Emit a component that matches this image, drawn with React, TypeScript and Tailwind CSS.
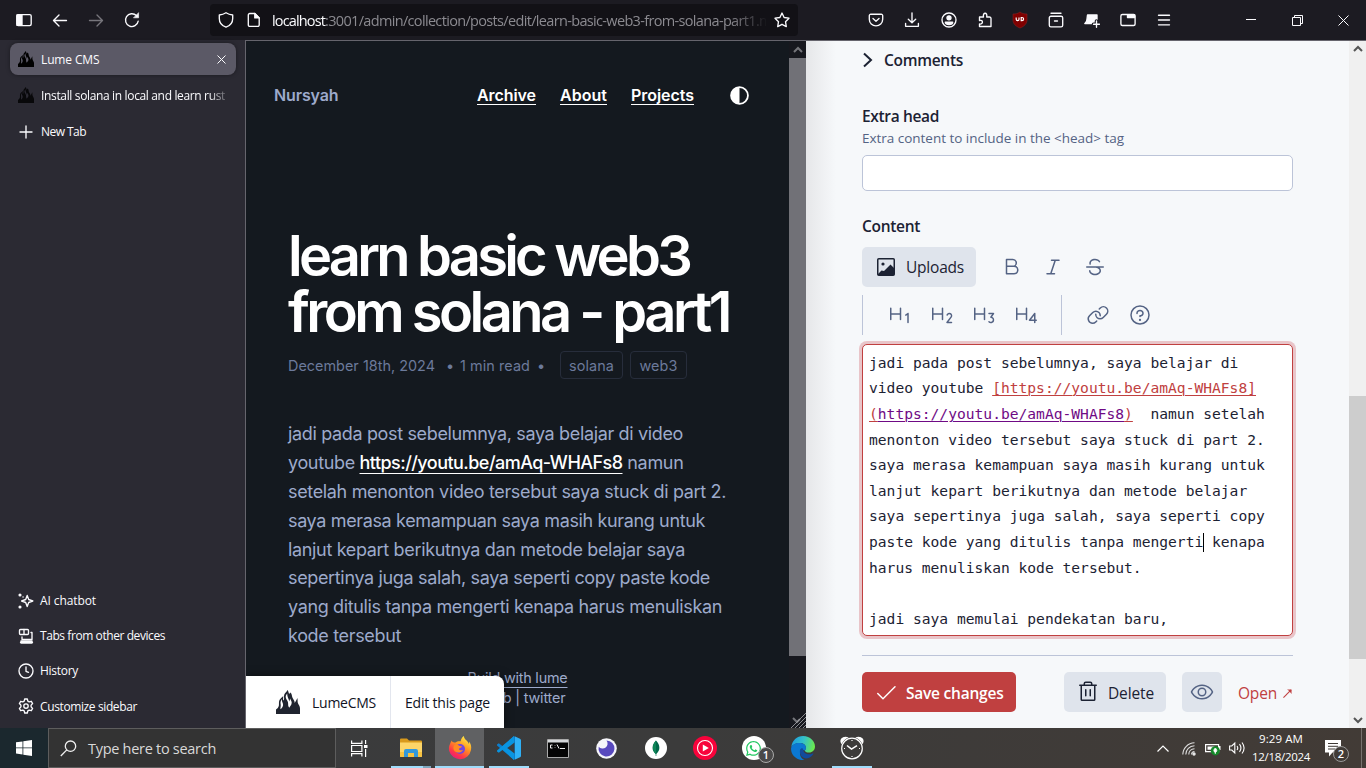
import { useLayoutEffect, useRef, type ReactNode } from "react";
import { FaWhatsapp } from "react-icons/fa";
import {
  PiCheck, PiEye, PiLink, PiQuestion, PiTextB, PiTextHFour, PiTextHOne, PiTextHThree,
  PiTextHTwo, PiTextItalic, PiTextStrikethrough, PiTrash,
} from "react-icons/pi";

/** Single-line text whose letter spacing is computed so that it takes exactly `w` pixels. */
function Fit({ w, className = "", children }: { w: number; className?: string; children: string }) {
  const ref = useRef<HTMLSpanElement>(null);
  useLayoutEffect(() => {
    const el = ref.current;
    if (!el) return;
    el.style.letterSpacing = "0px";
    const natural = el.getBoundingClientRect().width;
    el.style.letterSpacing = `${(w - natural) / children.length}px`;
  }, [w, children]);
  return (
    <span ref={ref} className={`inline-block shrink-0 whitespace-pre ${className}`}>
      {children}
    </span>
  );
}

type IconProps = { size?: number; className?: string; children: ReactNode };
function Icon({ size = 16, className = "", children }: IconProps) {
  return (
    <svg
      width={size} height={size} viewBox="0 0 16 16" fill="none" stroke="currentColor"
      strokeWidth="1.35" strokeLinecap="round" strokeLinejoin="round" className={`shrink-0 ${className}`}
    >
      {children}
    </svg>
  );
}

function Slot({ children, className = "w-9" }: { children: ReactNode; className?: string }) {
  return <div className={`flex h-full shrink-0 items-center justify-center ${className}`}>{children}</div>;
}

function Flame({ size, className = "" }: { size: number; className?: string }) {
  return (
    <svg width={size} height={size} viewBox="0 0 24 24" fill="currentColor" className={`shrink-0 ${className}`}>
      <path
        fillRule="evenodd"
        d="M0 24v-4.500c1.200-1 2.600-2 2.900-4 .3-2.200-.4-4 .9-6 .7-1.200 2.400-2.200 3.400-3.500.3 1.500-.5 3 .2 4.500C9 9 7.400 7 8.300 4.500 9 2.700 11 2 11.300 0c1.500 1.300 1 2.600 1.900 4 .5-.5.600-1 1.100-1.600 2.100 1.600 1.300 3.600 2.300 5.600.7 1.500 2.200 2.600 2.100 5 1-1.500 2-3.300 2.700-5 .5 2.500-.2 4 .9 6 .8 1.500 1.700 2.500 1.700 4.500V24zM6 9c-1.500 2-1.700 3.300-1.300 5.500.3 1.800-.5 3-.2 4.700 1.500-1.200 3-3 2.500-5.200C6.700 12.500 5.500 11 6 9zM11.200 3.500c-1 1.500-1.900 2.500-1.300 4.500.6 2 1.800 2.700 2.100 4.500.4 2-.3 3.300 1.200 5.200.7-1.500 2.600-2.500 2.500-5.200-.1-1.500-1-2.300-1.500-4-.5 1-.4 2-.9 3-.5-3-2.300-4.500-2.100-8z"
      />
    </svg>
  );
}

function TopBar() {
  return (
    <header className="flex h-10 shrink-0 items-center bg-[#1c1b22] text-[#fbfbfe]">
      <div className="flex h-full w-[210px] pl-1.5">
        <Slot><Icon><rect x=".8" y="2.600" width="14.400" height="11" rx="1.500" /><path d="M1 3h5v10.300H1z" fill="currentColor" /></Icon></Slot>
        <Slot><Icon><path d="M14.500 8.500H1.500M7 3 1.500 8.500 7 14" /></Icon></Slot>
        <Slot className="w-9 text-[#77767c]"><Icon><path d="M1.500 8.500h13M9 3l5.500 5.500L9 14" /></Icon></Slot>
        <Slot><Icon><path d="M14.200 9.200A6.400 6.400 0 1 1 12.400 3.600" /><path d="M14.600 1v4.800H9.800z" fill="currentColor" strokeWidth=".6" /></Icon></Slot>
      </div>
      <div className="flex h-8 w-[588px] items-center rounded bg-[#121116]">
        <Slot className="w-8"><Icon><path d="M8 .8c2 1.300 4.200 2 6.700 2.200v3.500c0 4-2.400 7.200-6.700 8.700-4.300-1.500-6.700-4.700-6.700-8.700V3C3.800 2.800 6 2.100 8 .8z" /></Icon></Slot>
        <Slot className="w-6"><Icon><path d="M3.800 1.500h5l4.400 4.400v7a1.500 1.500 0 0 1-1.500 1.500h-7.900a1.500 1.500 0 0 1-1.500-1.500V3a1.500 1.500 0 0 1 1.500-1.500z" /><path d="M8.800 1.500v4.400h4.400z" fill="currentColor" /></Icon></Slot>
        <div className="mt-0.5 ml-1.5 flex w-[496px] overflow-hidden whitespace-pre font-['Open_Sans',sans-serif] text-[14.500px] [mask-image:linear-gradient(to_right,black_458px,transparent_496px)]">
          <Fit w={53}>localhost</Fit>
          <Fit w={455} className="text-[#8b8a90]">:3001/admin/collection/posts/edit/learn-basic-web3-from-solana-part1.md</Fit>
        </div>
        <Slot className="ml-auto w-8"><Icon><path d="m8 1 2.100 4.500 4.900.7-3.500 3.500.8 4.900L8 12.300l-4.300 2.300.8-4.900L1 6.200l4.900-.7z" /></Icon></Slot>
      </div>
      <div className="ml-[60px] flex h-full">
        <Slot><Icon><path d="M2.800 2.200h10.400a1.500 1.500 0 0 1 1.500 1.500v3.500a6.700 6.700 0 0 1-13.400 0V3.700a1.500 1.500 0 0 1 1.500-1.500z" /><path d="m5 6.500 3 2.700 3-2.700" /></Icon></Slot>
        <Slot><Icon><path d="M8 .8v9.700M4.300 7.200 8 10.700l3.700-3.500M1.600 11.500v2.800h12.800v-2.800" /></Icon></Slot>
        <Slot className="w-[37px]"><Icon><circle cx="8" cy="8" r="7" /><circle cx="8" cy="5.800" r="2" fill="currentColor" /><path d="M4.300 10.200h7.400c0 1.300-1.400 2.300-3.700 2.300s-3.700-1-3.700-2.300z" fill="currentColor" /></Icon></Slot>
        <Slot className="w-[35px]"><Icon><path d="M2.500 14.500V12c4 .6 3.800-4.600 0-3.500V5h4c-1.100-5 4.300-5 3.200 0h2.800a1.500 1.500 0 0 1 1.500 1.500v8z" /></Icon></Slot>
        <Slot>
          <svg width="16" height="18" viewBox="0 0 16 18">
            <path d="M8 1c2 1.500 4.200 2 7 2v6c0 3.800-3 6.500-7 8-4-1.500-7-4.200-7-8V3c2.800 0 5-.5 7-2z" fill="#800000" stroke="#8a2020" strokeWidth=".6" />
            <path d="M4.200 6.500v1.800a1.400 1.400 0 0 0 2.800 0V6.500M9.200 6.500v3.200h.8a1.600 1.600 0 0 0 0-3.200z" fill="none" stroke="#fff" strokeWidth="1.200" />
          </svg>
        </Slot>
        <Slot><Icon><path d="M3 1.200h10M1.300 8V5.800a1.600 1.600 0 0 1 1.600-1.600h10.200a1.600 1.600 0 0 1 1.600 1.600v7.500a1.600 1.600 0 0 1-1.600 1.600H2.900a1.600 1.600 0 0 1-1.600-1.600zM6.500 9h3" /></Icon></Slot>
        <Slot><Icon><path d="M3.500 3h9.500v8.500H.8C2.600 10.500 3 9 3 7z" fill="currentColor" /><path d="M12.500 9v6.500M9.500 12.200h6.500" stroke="#1c1b22" strokeWidth="3.600" /><path d="M12.500 9v6.300M9.500 12.200h6" /></Icon></Slot>
        <Slot><Icon><rect x=".9" y="2.500" width="14.200" height="11" rx="1.500" /><path d="M7.500 3h7v2.500h-7z" fill="currentColor" /></Icon></Slot>
        <Slot><Icon><path d="M2.500 3.200h11M2.500 8h11M2.500 12.800h11" /></Icon></Slot>
      </div>
      <div className="ml-[46px] flex h-full">
        <Slot className="w-[46px]"><svg width="10" height="2"><path d="M0 0h10v1H0z" fill="currentColor" /></svg></Slot>
        <Slot className="w-[46px]"><svg width="11" height="11" fill="none" stroke="currentColor"><path d="M.5 2.500h8v8h-8zM2.500 2.500v-2h8v8h-2" /></svg></Slot>
        <Slot className="w-[46px]"><svg width="11" height="11" stroke="currentColor"><path d="m.5.5 10 10M10.500.5l-10 10" /></svg></Slot>
      </div>
    </header>
  );
}

function Sidebar() {
  const row = "flex h-[35px] items-center pl-[18px]";
  return (
    <aside className="flex w-[245px] shrink-0 flex-col bg-[#2b2a33] font-['Open_Sans',sans-serif] text-[12px] text-[#fbfbfe]">
      <div className="mt-[3px] flex flex-col gap-1 pl-2.5">
        <div className="flex h-8 w-[226px] items-center rounded-lg bg-[#5b5966] pl-2 shadow-[0_0_4px_rgba(0,0,0,0.4)]">
          <Flame size={16} className="text-black" />
          <Fit w={58.5} className="mt-0.5 ml-[7px]">Lume CMS</Fit>
          <svg width="9" height="9" stroke="currentColor" className="mr-[10px] ml-auto"><path d="m.5.5 8 8M8.500.5l-8 8" /></svg>
        </div>
        <div className="flex h-8 w-[226px] items-center pl-2">
          <Flame size={16} className="text-[#08080a]" />
          <div className="mt-0.5 ml-[7px] w-[186px] overflow-hidden [mask-image:linear-gradient(to_right,black_168px,transparent_190px)]">
            <Fit w={184}>Install solana in local and learn rust</Fit>
          </div>
        </div>
        <div className="flex h-8 w-[226px] items-center pl-2">
          <Icon className="mt-px"><path d="M8 2v12M2 8h12" /></Icon>
          <Fit w={45} className="mt-0.5 ml-[7px]">New Tab</Fit>
        </div>
      </div>
      <div className="mt-auto mb-[5px] flex flex-col">
        <div className={row}>
          <Icon><path d="M9.200 2.400 10.700 6.500 14.800 8l-4.100 1.500-1.500 4.100-1.500-4.100L3.600 8l4.100-1.500z" /><circle cx="2" cy="2" r=".9" fill="currentColor" /><circle cx="2" cy="14" r=".9" fill="currentColor" /><path d="M5 4h.1" /></Icon>
          <Fit w={56} className="ml-1.5">AI chatbot</Fit>
        </div>
        <div className={row}>
          <Icon><rect x="1.500" y="1.500" width="9" height="5" rx="1" /><path d="M6 1.500v4.700M13 4.500h1v7H4V9M2.500 14.300h12" /><path d="M3 13h11v2H3z" fill="currentColor" /></Icon>
          <Fit w={125} className="ml-1.5">Tabs from other devices</Fit>
        </div>
        <div className={row}>
          <Icon><circle cx="8" cy="8" r="7" /><path d="M8 4v4.300l2.500 1" /></Icon>
          <Fit w={38} className="ml-1.5">History</Fit>
        </div>
        <div className={row}>
          <Icon className="mt-px"><circle cx="8" cy="8" r="2.200" /><path d="M6.700 1h2.600l.5 2.100 1.400.8 2.100-.6 1.300 2.200-1.500 1.600v1.800l1.500 1.600-1.300 2.200-2.100-.6-1.400.8-.5 2.100H6.700l-.5-2.100-1.400-.8-2.100.6-1.300-2.200 1.500-1.600V7.100L1.400 5.500l1.300-2.200 2.100.6 1.400-.8z" /></Icon>
          <Fit w={97} className="mt-0.5 ml-1.5">Customize sidebar</Fit>
        </div>
      </div>
    </aside>
  );
}

function Preview() {
  const link = "underline decoration-1 underline-offset-[3px] text-white";
  return (
    <section className="relative flex w-[560px] shrink-0 font-['Inter',sans-serif]">
      <div className="relative flex w-[543px] flex-col overflow-hidden bg-[#14191f]">
        <nav className="flex h-[24px] items-center pl-7 text-[16px] leading-6 font-semibold text-[#9daacb] mt-[42px]">
          <Fit w={64.500}>Nursyah</Fit>
          <Fit w={59} className={`ml-[138.500px] ${link}`}>Archive</Fit>
          <Fit w={47} className={`ml-6 ${link}`}>About</Fit>
          <Fit w={63} className={`ml-6 ${link}`}>Projects</Fit>
          <svg width="19" height="19" viewBox="0 0 18 18" className="ml-9 text-white">
            <circle cx="9" cy="9" r="8" fill="none" stroke="currentColor" strokeWidth="1.700" />
            <path d="M9 1a8 8 0 0 0 0 16z" fill="currentColor" />
          </svg>
        </nav>
        <h1 className="mt-[121px] flex flex-col pl-[42px] text-[56px] leading-[56px] font-semibold text-white">
          <Fit w={401} className="self-start">learn basic web3</Fit>
          <Fit w={441} className="self-start">from solana - part1</Fit>
        </h1>
        <div className="mt-[11px] flex h-7 items-center pl-[42px] text-[14.400px] text-[#6c7a9b]">
          <Fit w={147} className="mt-px">December 18th, 2024</Fit>
          <Fit w={6} className="mt-px ml-[11px]">•</Fit>
          <Fit w={70} className="mt-px ml-2">1 min read</Fit>
          <Fit w={6} className="mt-px ml-[7px]">•</Fit>
          <div className="ml-[17px] flex h-7 w-[63px] items-center justify-center rounded border border-[#272d3b] pt-px"><Fit w={45}>solana</Fit></div>
          <div className="ml-[7px] flex h-7 w-[57px] items-center justify-center rounded border border-[#272d3b] pt-px"><Fit w={38}>web3</Fit></div>
        </div>
        <p className="mt-[41.400px] flex flex-col items-start pl-[42px] text-[18px] leading-[28.800px] text-[#9daacb]">
          <Fit w={395}>jadi pada post sebelumnya, saya belajar di video</Fit>
          <span className="flex">
            <Fit w={71.500}>{"youtube "}</Fit>
            <Fit w={263} className="font-medium text-white underline decoration-1 underline-offset-[4px]">https://youtu.be/amAq-WHAFs8</Fit>
            <Fit w={61}>{" namun"}</Fit>
          </span>
          <Fit w={438}>setelah menonton video tersebut saya stuck di part 2.</Fit>
          <Fit w={417}>saya merasa kemampuan saya masih kurang untuk</Fit>
          <Fit w={397}>lanjut kepart berikutnya dan metode belajar saya</Fit>
          <Fit w={422}>sepertinya juga salah, saya seperti copy paste kode</Fit>
          <Fit w={434}>yang ditulis tanpa mengerti kenapa harus menuliskan</Fit>
          <Fit w={113}>kode tersebut</Fit>
        </p>
        <footer className="mt-[17.600px] flex flex-col items-center text-[14.400px] leading-5 text-[#9daacb]">
          <Fit w={100} className="underline decoration-1 underline-offset-[4px]">Build with lume</Fit>
          <Fit w={96}>github | twitter</Fit>
        </footer>
        <div className="absolute bottom-0 left-0 flex h-[52px] w-[258px] items-center rounded-tr-lg bg-white font-['Open_Sans',sans-serif] text-[14px] font-medium text-[#10131f] shadow-[0_0_10px_rgba(0,0,0,0.5)]">
          <div className="flex h-full w-[145px] items-center border-r border-[#e3e6ee] pl-[30px]">
            <Flame size={24} className="text-[#20242f]" />
            <Fit w={64} className="mt-px ml-3">LumeCMS</Fit>
          </div>
          <Fit w={85} className="mt-px ml-3.5">Edit this page</Fit>
        </div>
      </div>
      <div className="flex w-[17px] flex-col bg-[#17181e]">
        <div className="flex h-[17px] items-center justify-center text-[#75757a]">
          <svg width="10" height="8" fill="none" stroke="currentColor" strokeWidth="2"><path d="m1 6 4-4 4 4" /></svg>
        </div>
        <div className="h-[598px] bg-[#717177]" />
        <svg width="17" height="17" className="mt-auto" fill="none" stroke="#a9a9ad" strokeWidth=".8">
          <path d="m4 7 4 4 3-3" stroke="#75757a" strokeWidth="2" /><path d="M2 17 17 2M6 17 17 6M10 17l7-7M14 17l3-3" />
        </svg>
      </div>
    </section>
  );
}

const tool = "flex w-[42px] h-10 shrink-0 items-center justify-center text-[#546384]";

function Editor() {
  const line = "block h-[25.600px] whitespace-pre";
  return (
    <div className="mt-[9px] flex h-[292px] flex-col rounded-[5px] border border-[#c04040] bg-white pt-[4.800px] pl-1.5 font-['DejaVu_Sans_Mono',monospace] text-[14.617px] leading-[25.600px] text-[#1c2233] ring-[3px] ring-[#e9c5c9]">
      <span className={line}>jadi pada post sebelumnya, saya belajar di</span>
      <span className={line}>video youtube <span className="text-[#c04040] underline decoration-1 underline-offset-2">[https://youtu.be/amAq-WHAFs8]</span></span>
      <span className={line}><span className="text-[#c04040] underline decoration-1 underline-offset-2">(</span><span className="text-[#6f0a85] underline decoration-1 underline-offset-2">https://youtu.be/amAq-WHAFs8</span><span className="text-[#c04040] underline decoration-1 underline-offset-2">)</span>{"  namun setelah"}</span>
      <span className={line}>menonton video tersebut saya stuck di part 2.</span>
      <span className={line}>saya merasa kemampuan saya masih kurang untuk</span>
      <span className={line}>lanjut kepart berikutnya dan metode belajar</span>
      <span className={line}>saya sepertinya juga salah, saya seperti copy</span>
      <span className={line}>paste kode yang ditulis tanpa mengerti<span className="-mr-px inline-block h-[19px] w-px bg-black align-middle" /> kenapa</span>
      <span className={line}>harus menuliskan kode tersebut.</span>
      <span className={line}> </span>
      <span className={line}>jadi saya memulai pendekatan baru,</span>
    </div>
  );
}

function AdminPanel() {
  return (
    <section className="flex min-w-0 flex-1 bg-[#f6f8fa] font-['Open_Sans',sans-serif] text-[#1c2233]">
      <div className="w-[30px] shrink-0 bg-linear-to-r from-[#e6e7e9] to-[#f6f8fa]" />
      <div className="ml-[26px] flex w-[431px] flex-col text-[15.500px]">
        <div className="mt-[7px] flex h-6 items-center font-semibold">
          <svg width="12" height="16" fill="none" stroke="currentColor" strokeWidth="2"><path d="m2 1.500 7 6.500-7 6.500" /></svg>
          <Fit w={79} className="mt-0.5 ml-2.5">Comments</Fit>
        </div>
        <div className="mt-[33px] flex h-6 items-center font-semibold"><Fit w={77}>Extra head</Fit></div>
        <div className="-mt-px flex h-5 items-center text-[13.500px] text-[#546384]"><Fit w={262}>{"Extra content to include in the <head> tag"}</Fit></div>
        <div className="mt-[7px] h-9 rounded-[5px] border border-[#bcc4d8] bg-white" />
        <div className="mt-6 flex h-6 items-center font-semibold"><Fit w={58}>Content</Fit></div>
        <div className="mt-2 flex h-10">
          <div className="flex w-[114px] items-center rounded-[5px] bg-[#dfe4ec] pl-[15px]">
            <svg width="18" height="18"><rect x=".75" y=".75" width="16.500" height="16.500" rx="1" fill="none" stroke="currentColor" strokeWidth="1.500" /><circle cx="6" cy="6" r="1.600" fill="currentColor" /><path d="m1 16 3.500-3.500 2.500.5L13.500 6.500 17 10v7H1z" fill="currentColor" /></svg>
            <Fit w={58} className="mt-px ml-[11px]">Uploads</Fit>
          </div>
          <div className="ml-[14px] flex">
            <span className={tool}><PiTextB size={24} /></span>
            <span className={tool}><PiTextItalic size={24} /></span>
            <span className={tool}><PiTextStrikethrough size={24} /></span>
          </div>
        </div>
        <div className="mt-2 flex h-10 border-l border-[#bcc4d8] pl-[15px]">
          <span className={tool}><PiTextHOne size={24} /></span>
          <span className={tool}><PiTextHTwo size={24} /></span>
          <span className={tool}><PiTextHThree size={24} /></span>
          <span className={tool}><PiTextHFour size={24} /></span>
          <span className="ml-[15px] w-px bg-[#bcc4d8]" />
          <span className={`ml-[15px] ${tool}`}><PiLink size={24} /></span>
          <span className={tool}><PiQuestion size={24} /></span>
        </div>
        <Editor />
        <div className="mt-[19px] h-px shrink-0 bg-[#bcc4d8]" />
        <div className="mt-4 flex h-10 shrink-0 items-stretch">
          <div className="flex w-[154px] items-center rounded-[5px] bg-[#c04040] pl-3 font-semibold text-white">
            <PiCheck size={24} className="shrink-0" /><Fit w={97.500} className="mt-[3px] ml-2">Save changes</Fit>
          </div>
          <div className="ml-12 flex w-[102px] items-center rounded-[5px] bg-[#dfe4ec] pl-3">
            <PiTrash size={24} className="shrink-0" /><Fit w={46} className="mt-[3px] ml-2">Delete</Fit>
          </div>
          <div className="ml-4 flex w-10 items-center justify-center rounded-[5px] bg-[#dfe4ec] text-[#546384]"><PiEye size={24} /></div>
          <div className="ml-4 flex items-center pt-[3px] text-[#c04040]">
            <Fit w={39}>Open</Fit>
            <svg width="9" height="9" viewBox="0 0 10 10" className="ml-1.5" fill="none" stroke="currentColor" strokeWidth="1.200"><path d="m.5 9.500 8.500-8.500" /><path d="M4.500.5h5v5L8 3.500 6.500 2z" fill="currentColor" stroke="none" /></svg>
          </div>
        </div>
      </div>
      <div className="ml-auto flex w-[17px] flex-col items-center bg-[#f0f0f0] text-[#555]">
        <svg width="10" height="8" className="mt-1" fill="none" stroke="currentColor" strokeWidth="2"><path d="m1 6 4-4 4 4" /></svg>
        <div className="mt-[343px] h-[263px] w-full bg-[#cdcdcd]" />
        <svg width="10" height="8" className="mt-auto mb-1" fill="none" stroke="currentColor" strokeWidth="2"><path d="m1 2 4 4 4-4" /></svg>
      </div>
    </section>
  );
}

function TaskButton({ children, bar = "", active = false }: { children: ReactNode; bar?: string; active?: boolean }) {
  return (
    <div className={`relative flex h-10 w-[49px] shrink-0 items-center justify-center ${active ? "bg-[#606163]" : ""}`}>
      {children}
      {bar && <span className={`absolute bottom-0 h-0.5 bg-[#9fdcfb] ${bar}`} />}
    </div>
  );
}

function Taskbar() {
  return (
    <footer className="flex h-10 shrink-0 items-center bg-linear-to-r from-[#3a3b3d] via-[#3b3b3b] to-[#423b36] font-['Open_Sans',sans-serif] text-white">
      <div className="flex h-10 w-12 items-center justify-center bg-[#1b282e]">
        <svg width="16" height="16" fill="currentColor"><path d="m0 2.300 6.500-.9v6.100H0zM7.300 1.300 16 0v7.500H7.300zM0 8.300h6.500v6.200L0 13.600zM7.300 8.300H16V16l-8.700-1.300z" /></svg>
      </div>
      <div className="flex h-10 w-[288px] items-center border border-[#5d5d5d] bg-[#333] pl-[11px] text-[#d9d9d9]">
        <svg width="17" height="17" fill="none" stroke="#f0f0f0" strokeWidth="1.300"><circle cx="10.500" cy="6.200" r="5.200" /><path d="M6.800 9.900.8 16" /></svg>
        <Fit w={128} className="mt-0.5 ml-[11px] text-[14.500px]">Type here to search</Fit>
      </div>
      <div className="flex w-[50px] justify-center pr-1">
        <svg width="17" height="17" fill="none" stroke="#fff" strokeWidth="1.200"><path d="M.6.500v2.800h10.300V.5M.6 16.500v-2.800h10.300v2.800M.6 5.500h10.300v6H.6zM14.600 0v4M14.600 9v8" /><path d="M13 5h3.500v3H13z" fill="#fff" stroke="none" /></svg>
      </div>
      <TaskButton bar="left-[5px] w-10 border-r-8 border-[#7ea6bd]">
        <svg width="24" height="20" viewBox="0 0 24 20"><path d="M1 1.500q0-1 1-1h6l2 2h12q1 0 1 1V18H1z" fill="#d99a1c" /><path d="M1 4.500h22V18q0 1-1 1H2q-1 0-1-1z" fill="#fdd568" /><path d="M1 14h22v4q0 1-1 1H2q-1 0-1-1z" fill="#f7c242" /><path d="M5 19v-6q0-2 2-2h10q2 0 2 2v6h-4v-4H9v4z" fill="#3398db" /></svg>
      </TaskButton>
      <TaskButton bar="left-0 w-[49px]" active>
        <svg width="24" height="24" viewBox="0 0 24 24">
          <defs>
            <linearGradient id="ff" x1=".8" y1="0" x2=".2" y2="1"><stop stopColor="#fff44f" /><stop offset=".4" stopColor="#ff9a20" /><stop offset=".75" stopColor="#ff3647" /><stop offset="1" stopColor="#e31587" /></linearGradient>
          </defs>
          <path d="M3.500 4.500C3 6 2.600 6.500 2 8c-1.200 2.500-1.300 5-.8 7A11.200 11.200 0 0 0 23 14c.8-4-.5-6.500-2-8.500.2 1 .2 2-.1 2.500-1-3.500-5-4.500-5-8-2 1.300-3 3.300-3.200 5.300-2-.3-4 .1-5.200 1.200C5.500 6.500 4 6 3.500 4.500z" fill="url(#ff)" />
          <circle cx="12" cy="13" r="5" fill="#7146df" />
          <path d="M6 9.500c2-1.500 4-1 5 .2 1.500.4 3 .3 3 1-.4 1-2.500 1-3 2 0 1.600 2 2 4 1-1 3-5.500 4-8.500 1.300C5.300 13.500 5 11.500 6 9.500z" fill="#ff8a22" />
        </svg>
      </TaskButton>
      <TaskButton bar="left-[5px] w-10">
        <svg width="24" height="24" viewBox="0 0 24 24"><path d="M17 0 5.700 10.300 1.800 7.300 0 8.500v1l17 14.500 2-3V3z" fill="#0b7fcf" /><path d="M17 24 5.700 13.700l-3.900 3L0 15.500v-1L17 0z" fill="#0994e0" /><path d="M17 0l6 2.700q1 .5 1 1.500v15.600q0 1-1 1.500L17 24q1 0 1-1.500V1.500Q18 0 17 0z" fill="#2fb0f5" /><path d="M17.500 6.500v11L10.200 12z" fill="#3a3b3d" /></svg>
      </TaskButton>
      <TaskButton>
        <svg width="22" height="19"><path d="M.5.500h21v18H.5z" fill="#050505" stroke="#aaa" /><path d="M1 1h20v2.500H1z" fill="#d5d8da" /><path d="M5.500 6H3.500v3h2M8 6v.5M8 8.500V9M10 5.500l2 4M13 9.500h5" stroke="#eee" fill="none" /></svg>
      </TaskButton>
      <TaskButton>
        <svg width="21" height="21"><circle cx="10.500" cy="10.500" r="10.300" fill="#f5f5fa" /><path d="M10.500 2.500a8 8 0 1 1-7.800 6.200 4.400 4.400 0 0 0 7.800-6.200z" fill="#5849be" /></svg>
      </TaskButton>
      <TaskButton>
        <svg width="22" height="22"><circle cx="11" cy="11" r="11" fill="#fff" /><path d="M11 3.500c4.500 4.500 4.500 10 .3 13.500V19h-.6v-2C6.500 13.500 6.500 8 11 3.500z" fill="#00684a" /><path d="M11 3.500v13.700C7 13.500 6.800 8 11 3.500z" fill="#0d8556" /></svg>
      </TaskButton>
      <TaskButton>
        <svg width="24" height="24"><circle cx="12" cy="12" r="12" fill="#f8033b" /><circle cx="12" cy="12" r="7.500" fill="none" stroke="#fff" strokeWidth="1.100" /><path d="m9.800 8.500 6 3.500-6 3.500z" fill="#fff" /></svg>
      </TaskButton>
      <TaskButton>
        <span className="flex size-6 items-center justify-center rounded-full bg-white"><FaWhatsapp size={17} color="#25c863" /></span>
        <span className="absolute top-[19px] left-[29px] flex size-4 items-center justify-center rounded-full border border-[#aaa] bg-[#4a4949] text-[11px] font-semibold">1</span>
      </TaskButton>
      <TaskButton>
        <svg width="24" height="24" viewBox="0 0 24 24">
          <defs><linearGradient id="ed" x1="0" y1=".3" x2="1" y2=".5"><stop stopColor="#1b9de2" /><stop offset=".5" stopColor="#35c1c8" /><stop offset="1" stopColor="#6bea4c" /></linearGradient></defs>
          <path d="M.3 11C1 4.500 6 0 12 0c7.500 0 12 5.500 12 10.500 0 3.500-2.600 6-5.800 6-3 0-4.300-1-4.300-1.800 0-.7 1-1.200 1-3C14.900 9 12.500 7 8.500 7 4.500 7 1.500 9 .3 11z" fill="url(#ed)" />
          <path d="M.1 12C.8 9 4 7 8.200 7c4 0 6.700 2 6.700 4.700 0 1.800-1 2.300-1 3-3-2-5.500 1-4.800 4 .5 2.500 2 4.500 4.500 5.300C6 25-.6 19 .1 12z" fill="#0b78d2" />
          <path d="M9 14c-1 5 3 9 7.500 8.300 2.500-.7 4.500-2 5.800-4.300.3-.6-.2-.8-.7-.5-4 2-9.500.5-9.500-4.500 0-1-2.500-1-3.100 1z" fill="#114b9c" />
        </svg>
      </TaskButton>
      <TaskButton bar="left-[5px] w-10">
        <svg width="24" height="24" viewBox="0 0 24 24" fill="none" stroke="#fff" strokeWidth="1.200"><circle cx="12" cy="12.500" r="10.300" /><path d="m7 9.500 4.500 3.700 5.500-3.500" strokeWidth="1.500" /><path d="M1.500 7C0 4 2.500.5 7 1.500 4.500 2.600 3 4.300 1.500 7zM22.500 7C24 4 21.500.5 17 1.500 19.500 2.600 21 4.300 22.500 7z" fill="#fff" /><path d="M12 4v1M12 20v1M4 12.500h1M19 12.500h1" /></svg>
      </TaskButton>
      <div className="ml-auto flex h-full items-center">
        <svg width="12" height="7" fill="none" stroke="#fff" strokeWidth="1.200"><path d="m.5 6.500 5.500-5.500 5.500 5.500" /></svg>
        <svg width="14" height="14" className="mt-0.5 ml-[13px]" fill="none" stroke="#ddd" strokeWidth="1.100"><path d="M.8 12.500C1 6 6 1 12.500.8M3.800 12.500c0-5 3.700-8.700 8.700-8.800M6.800 12.500c0-3.400 2.400-5.700 5.700-5.800M9.500 12.500c.1-1.800 1.200-2.900 3-3" /><circle cx="12" cy="12" r="1.200" fill="#fff" /></svg>
        <svg width="16" height="14" className="mt-0.5 ml-[9px]" fill="none"><path d="M.6 2.600h13v7h-13z" stroke="#fff" strokeWidth="1.200" /><path d="M2.500 4.500h7v3.200h-7zM14 4h1.500v4H14z" fill="#fff" /><circle cx="10.300" cy="8.800" r="4.600" fill="#15892a" /><path d="M10.300 6c2 1.800 2 3.500 0 4.500-2-1-2-2.700 0-4.500zM10.300 9v3" fill="#fff" stroke="#fff" strokeWidth=".8" /></svg>
        <svg width="17" height="14" className="ml-2" fill="none" stroke="#fff" strokeWidth="1.100"><path d="M.6 5h2.200l3-3v10l-3-3H.6zM8 5c1 1.300 1 2.700 0 4M10.500 3.200c1.900 2.500 1.900 5.100 0 7.600M13 1.500c2.800 3.700 2.800 7.300 0 11" /></svg>
        <div className="ml-[6px] flex w-[58px] flex-col items-center text-[11.500px] leading-[18px]">
          <Fit w={44}>9:29 AM</Fit>
          <Fit w={58}>12/18/2024</Fit>
        </div>
        <div className="relative ml-[15px] h-6 w-6">
          <svg width="16" height="17" className="mt-1"><path d="M0 0h16v12.500H7.500L4 16.500v-4H0z" fill="#fff" /><path d="M3 3.500h10M3 6.300h10M3 9h7" stroke="#403b37" /></svg>
          <span className="absolute top-[10px] left-2 flex size-4 items-center justify-center rounded-full border border-[#999] bg-[#403b37] text-[11px] font-semibold">2</span>
        </div>
        <span className="ml-[12px] h-full w-px bg-[#77726e]" />
        <span className="w-1" />
      </div>
    </footer>
  );
}

export default function App() {
  return (
    <div className="flex h-[768px] w-[1366px] flex-col overflow-hidden">
      <TopBar />
      <main className="flex min-h-0 flex-1">
        <Sidebar />
        <div className="flex min-w-0 flex-1 border-t border-l border-[#66656d]">
          <Preview />
          <AdminPanel />
        </div>
      </main>
      <Taskbar />
    </div>
  );
}
